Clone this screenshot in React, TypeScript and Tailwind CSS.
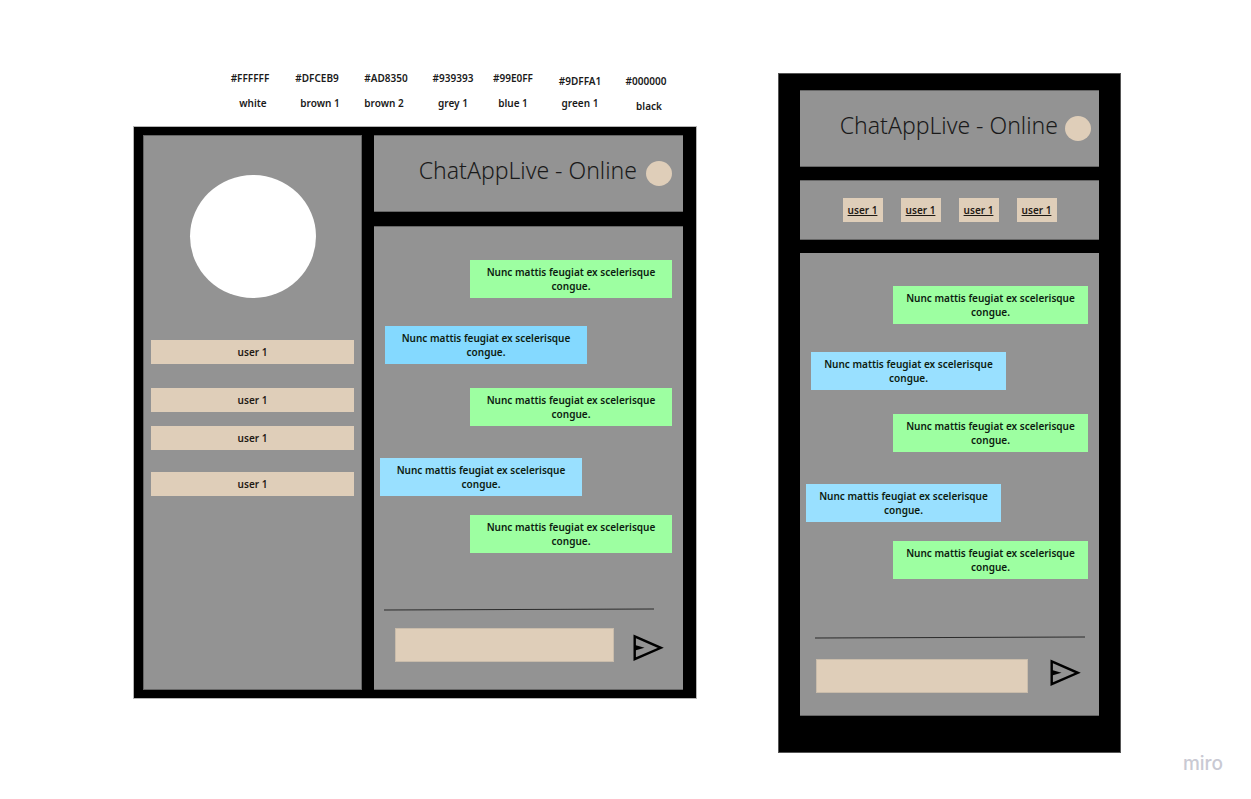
import React from "react";

type Message = { side: "left" | "right"; tone: string; spacing: string };

const MESSAGE_TEXT = "Nunc mattis feugiat ex scelerisque congue.";

const HEX_CODES = ["#FFFFFF", "#DFCEB9", "#AD8350", "#939393", "#99E0FF", "#9DFFA1", "#000000"];
const COLOR_NAMES = ["white", "brown 1", "brown 2", "grey 1", "blue 1", "green 1", "black"];

const DESKTOP_MESSAGES: Message[] = [
  { side: "right", tone: "bg-[#9DFFA1]", spacing: "" },
  { side: "left", tone: "bg-[#84D9FF]", spacing: "mt-7 ml-[5px]" },
  { side: "right", tone: "bg-[#9DFFA1]", spacing: "mt-6" },
  { side: "left", tone: "bg-[#99E0FF]", spacing: "mt-8" },
  { side: "right", tone: "bg-[#9DFFA1]", spacing: "mt-[19px]" },
];

const MOBILE_MESSAGES: Message[] = DESKTOP_MESSAGES.map((m) =>
  m.side === "left" ? { ...m, tone: "bg-[#99E0FF]" } : m
);

function Palette() {
  return (
    <div className="flex flex-col gap-3 pl-[85px] leading-[10px] text-[#1a1a1a]">
      <ul className="grid grid-cols-[64px_70px_68px_66px_54px_80px_52px] text-center">
        {HEX_CODES.map((code, i) => (
          <li key={code} className={i > 4 ? "mt-[3px]" : "mb-[3px]"}>
            {code}
          </li>
        ))}
      </ul>
      <ul className="grid grid-cols-[70px_64px_64px_74px_46px_88px_50px] text-center">
        {COLOR_NAMES.map((name, i) => (
          <li key={name} className={i > 5 ? "mt-[3px]" : "mb-[3px]"}>
            {name}
          </li>
        ))}
      </ul>
    </div>
  );
}

function TitleBar({ className }: { className: string }) {
  return (
    <header className={`flex h-[77px] items-center justify-end border-y border-[#666666] bg-[#939393] ${className}`}>
      <h1 className="pb-2 text-[23px] leading-8 font-light whitespace-nowrap text-[#1a1a1a]">ChatAppLive - Online</h1>
      <span className="h-[25px] w-[26px] shrink-0 rounded-[50%] bg-[#DFCEB9]" />
    </header>
  );
}

function Messages({ items, width }: { items: Message[]; width: string }) {
  return (
    <ul className="flex flex-col pt-[33px] pr-[11px] pl-[6px]">
      {items.map((m, i) => (
        <li
          key={i}
          className={`${width} ${m.tone} ${m.spacing} ${
            m.side === "right" ? "self-end" : "self-start"
          } px-2 py-[5px] text-center leading-[14px] text-[#0c1c10]`}
        >
          {MESSAGE_TEXT}
        </li>
      ))}
    </ul>
  );
}

function Divider() {
  return (
    <svg className="block h-[3px] w-full" viewBox="0 0 270 3" preserveAspectRatio="none" aria-hidden="true">
      <line x1="0" y1="2" x2="270" y2="1" stroke="#2b2b2b" strokeWidth="1" />
    </svg>
  );
}

function Composer({ className }: { className: string }) {
  return (
    <form className={`flex ${className}`} onSubmit={(e) => e.preventDefault()}>
      <input
        type="text"
        aria-label="Message"
        className="h-[34px] min-w-0 flex-1 border border-[#c9bcab] bg-[#DFCEB9] px-2 outline-none"
      />
      <button type="submit" aria-label="Send" className="shrink-0">
        <svg className="block" width="31" height="28" viewBox="0 0 31 28" aria-hidden="true">
          <path d="M1.7 2.4 L27.8 13.8 L1.7 25.2 Z" fill="none" stroke="#000" strokeWidth="2.4" />
          <path d="M2 11 L11.5 13.8 L2 16.6 Z" fill="#000" />
        </svg>
      </button>
    </form>
  );
}

function DesktopFrame() {
  return (
    <section className="grid grid-cols-[219fr_309fr] gap-3 border border-[#b5b5b5] bg-black pt-2 pr-[13px] pb-2 pl-[9px]">
      <aside className="flex flex-col border border-[#666666] bg-[#939393] px-[7px] pt-[39px]">
        <span className="h-[123px] w-[126px] self-center rounded-[50%] bg-white" />
        <nav className="mt-[42px] flex flex-col">
          {["", "mt-6", "mt-[14px]", "mt-[22px]"].map((spacing, i) => (
            <button
              key={i}
              type="button"
              className={`h-6 bg-[#DFCEB9] leading-[14px] text-[#1f1a14] ${spacing}`}
            >
              user 1
            </button>
          ))}
        </nav>
      </aside>
      <div className="flex min-w-0 flex-col gap-[14px]">
        <TitleBar className="gap-[9px] pr-[11px]" />
        <div className="border-y border-[#666666] bg-[#939393] pb-[27px]">
          <Messages items={DESKTOP_MESSAGES} width="w-[202px]" />
          <div className="mt-[55px] pr-[29px] pl-[10px]">
            <Divider />
          </div>
          <Composer className="mt-[17px] items-end gap-[19px] pr-[19px] pl-[21px]" />
        </div>
      </div>
    </section>
  );
}

function MobileFrame() {
  return (
    <section className="flex min-w-0 flex-col gap-[13px] border border-[#555555] bg-black px-[21px] pt-4 pb-[36px]">
      <TitleBar className="gap-[7px] pr-2" />
      <nav className="flex h-[60px] items-center justify-center gap-[18px] border-y border-[#666666] bg-[#939393]">
        {[0, 1, 2, 3].map((i) => (
          <a
            key={i}
            href="#user"
            className="flex h-6 w-10 items-center justify-center bg-[#DFCEB9] leading-[14px] text-[#1f1a14] underline"
          >
            user 1
          </a>
        ))}
      </nav>
      <div className="border-b border-[#666666] bg-[#939393] pb-[22px]">
        <Messages items={MOBILE_MESSAGES} width="w-[195px]" />
        <div className="mt-[57px] pr-[14px] pl-[15px]">
          <Divider />
        </div>
        <Composer className="mt-5 items-start gap-[22px] pr-[18px] pl-4" />
      </div>
    </section>
  );
}

export default function App() {
  return (
    <div className="min-h-screen bg-white font-['Noto_Sans','Open_Sans',sans-serif] text-[10px] font-semibold">
      <main className="grid grid-cols-[564fr_343fr] items-start gap-[81px] pt-[73px] pr-[130px] pl-[133px]">
        <div className="flex min-w-0 flex-col gap-[15px]">
          <Palette />
          <DesktopFrame />
        </div>
        <MobileFrame />
      </main>
      <footer className="flex justify-end pr-7">
        <span className="font-['Inter',sans-serif] text-[19px] leading-[22px] font-medium text-[#c9c9d3]">miro</span>
      </footer>
    </div>
  );
}
